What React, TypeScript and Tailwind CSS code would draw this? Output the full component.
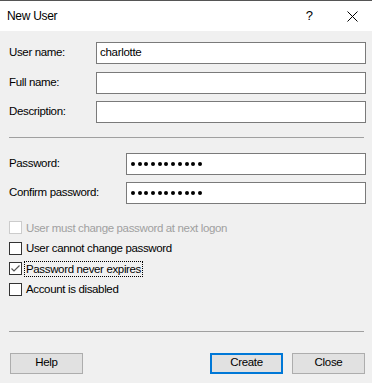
import { ReactNode } from "react";

const font = { fontFamily: '"Liberation Sans", Arial, sans-serif' };

function Field({ label, value, inputLeft, password }: { label: string; value?: string; inputLeft: string; password?: boolean }) {
  return (
    <div className="flex items-center h-[22px]">
      <div className={`${inputLeft} shrink-0 text-[11.5px] tracking-[-0.35px] text-black pl-[9px]`}>{label}</div>
      <div className="flex-1 h-[22px] bg-white border border-[#7a7a7a] flex items-center px-[3px] text-[11.5px] tracking-[-0.3px] text-black">
        {password ? (
          <span className="flex gap-[2.7px] pl-[1px]">
            {Array.from({ length: 11 }).map((_, i) => (
              <span key={i} className="w-[4px] h-[4px] rounded-full bg-black" />
            ))}
          </span>
        ) : (
          value
        )}
      </div>
    </div>
  );
}

function Check({ label, checked, disabled, focused }: { label: string; checked?: boolean; disabled?: boolean; focused?: boolean }) {
  return (
    <div className="flex items-center h-[13px] pl-[9px]">
      <div
        className={`w-[13px] h-[13px] bg-white border flex items-center justify-center ${
          disabled ? "border-[#cccccc]" : "border-[#333333]"
        }`}
      >
        {checked && (
          <svg width="11" height="11" viewBox="0 0 11 11">
            <path d="M1.5 5.5 L4 8 L9.5 2.5" fill="none" stroke="#555" strokeWidth="1.2" />
          </svg>
        )}
      </div>
      <span
        className={`ml-[3px] text-[11.5px] tracking-[-0.35px] leading-[14px] px-[1px] ${disabled ? "text-[#a0a0a0]" : "text-black"} ${
          focused ? "outline outline-1 outline-dotted outline-black" : ""
        }`}
      >
        {label}
      </span>
    </div>
  );
}

function Btn({ children, primary }: { children: ReactNode; primary?: boolean }) {
  return (
    <button
      className={`w-[73px] h-[21px] bg-[#e1e1e1] text-[11.5px] tracking-[-0.3px] text-black flex items-center justify-center ${
        primary ? "border-2 border-[#0078d7]" : "border border-[#adadad]"
      }`}
    >
      {children}
    </button>
  );
}

export default function App() {
  return (
    <div className="w-[372px] h-[383px] bg-[#f0f0f0] flex flex-col border-t border-[#555555]" style={font}>
      <div className="h-[30px] bg-white flex items-center justify-between shrink-0">
        <span className="pl-[7px] text-[12px] tracking-[-0.3px] text-black">New User</span>
        <div className="flex items-center pr-[14px]">
          <span className="text-[13px] text-black">?</span>
          <span className="ml-[34px] flex">
            <svg width="11" height="11" viewBox="0 0 11 11">
              <path d="M0.5 0.5 L10.5 10.5 M10.5 0.5 L0.5 10.5" stroke="#000" strokeWidth="1" />
            </svg>
          </span>
        </div>
      </div>

      <div className="flex flex-col pr-[6px] pt-[11px] gap-[7.5px]">
        <Field label="User name:" value="charlotte" inputLeft="w-[96px]" />
        <Field label="Full name:" inputLeft="w-[96px]" />
        <Field label="Description:" inputLeft="w-[96px]" />
      </div>

      <div className="ml-[9px] mr-[8px] mt-[14px] h-px bg-[#a0a0a0]" />

      <div className="flex flex-col pr-[6px] pt-[15px] gap-[7px]">
        <Field label="Password:" inputLeft="w-[126px]" password />
        <Field label="Confirm password:" inputLeft="w-[126px]" password />
      </div>

      <div className="flex flex-col pt-[17px] gap-[7.5px]">
        <Check label="User must change password at next logon" disabled />
        <Check label="User cannot change password" />
        <Check label="Password never expires" checked focused />
        <Check label="Account is disabled" />
      </div>

      <div className="ml-[9px] mr-[8px] mt-[35px] h-px bg-[#a0a0a0]" />

      <div className="flex items-center justify-between pl-[10px] pr-[7px] mt-[21px]">
        <Btn>Help</Btn>
        <div className="flex gap-[9px]">
          <Btn primary>Create</Btn>
          <Btn>Close</Btn>
        </div>
      </div>
    </div>
  );
}
